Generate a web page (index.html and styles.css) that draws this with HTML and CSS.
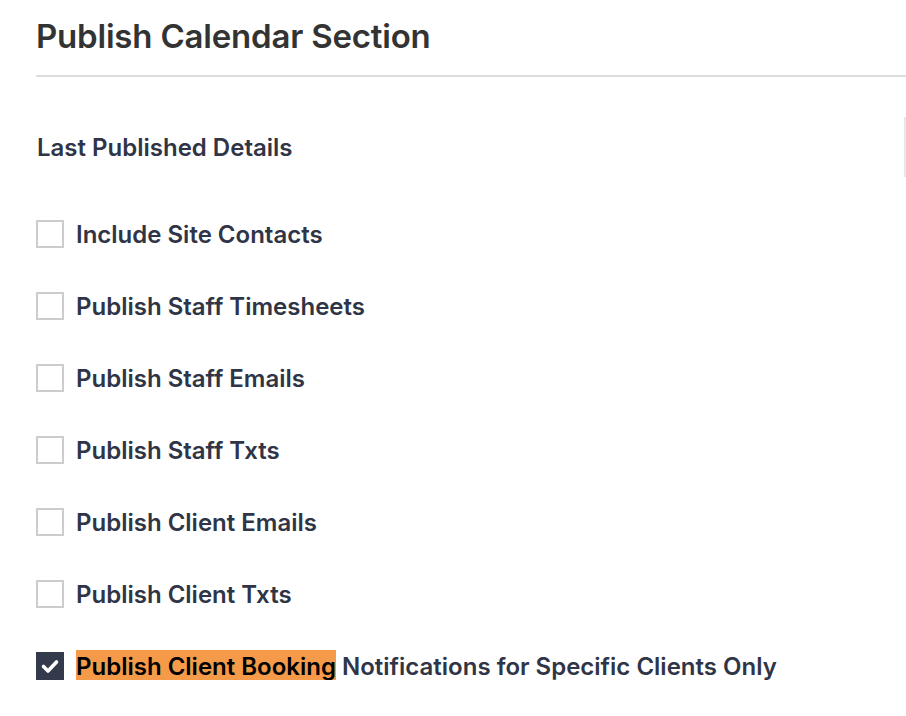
FILE: index.html
```html
<!DOCTYPE html>
<html>
<head>
<meta charset="utf-8">
<link rel="stylesheet" href="styles.css">
</head>
<body>
<div class="page">
  <h1 class="title">Publish Calendar Section</h1>
  <div class="divider"></div>
  <div class="details-row"><span class="details">Last Published Details</span></div>
  <ul class="options">
    <li class="option"><span class="box"></span><span class="label">Include Site Contacts</span></li>
    <li class="option"><span class="box"></span><span class="label">Publish Staff Timesheets</span></li>
    <li class="option"><span class="box"></span><span class="label">Publish Staff Emails</span></li>
    <li class="option"><span class="box"></span><span class="label">Publish Staff Txts</span></li>
    <li class="option"><span class="box"></span><span class="label">Publish Client Emails</span></li>
    <li class="option"><span class="box"></span><span class="label">Publish Client Txts</span></li>
    <li class="option"><span class="box checked"><svg viewBox="0 0 28 28" width="28" height="28"><path d="M7.5 14.5 L12 19 L20.5 10" fill="none" stroke="#fff" stroke-width="3.6" stroke-linecap="round" stroke-linejoin="round"/></svg></span><span class="label"><mark class="hl">Publish Client Booking</mark> Notifications for Specific Clients Only</span></li>
  </ul>
</div>
</body>
</html>
```

FILE: styles.css
```css
html, body {
  margin: 0;
  padding: 0;
  background: #fff;
}
body {
  font-family: Inter, "Noto Sans", sans-serif;
}
.page {
  padding-left: 36px;
}
.title {
  margin: 0;
  padding-top: 17px;
  font-size: 33px;
  line-height: 38px;
  font-weight: 600;
  color: #333333;
  letter-spacing: -0.2px;
}
.divider {
  margin-top: 20px;
  height: 2px;
  background: #dddddd;
}
.details-row {
  margin-top: 40px;
  height: 60px;
  display: flex;
  align-items: center;
  border-right: 2px solid #e6e6e6;
}
.details {
  font-size: 24px;
  font-weight: 600;
  color: #2f3546;
  padding-left: 1px;
}
.options {
  list-style: none;
  margin: 43px 0 0 0;
  padding: 0;
  display: flex;
  flex-direction: column;
  gap: 44px;
}
.option {
  display: flex;
  align-items: center;
  height: 28px;
}
.box {
  box-sizing: border-box;
  width: 28px;
  height: 28px;
  border: 2px solid #cccccc;
  background: #fff;
  flex: none;
  display: flex;
  align-items: center;
  justify-content: center;
}
.box.checked {
  background: #323a4c;
  border-color: #323a4c;
}
.box.checked svg {
  flex: none;
}
.label {
  margin-left: 12px;
  font-size: 24px;
  font-weight: 600;
  color: #2f3546;
  white-space: nowrap;
}
.hl {
  background: #f59a48;
  color: #000;
  padding: 2px 0 3px 0;
}
```
